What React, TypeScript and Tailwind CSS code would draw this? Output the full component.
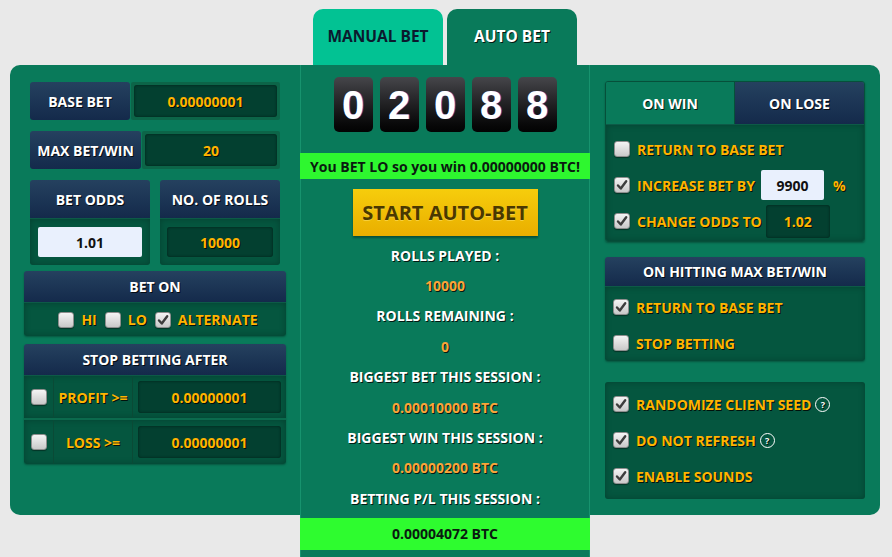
import React from "react";

const FONT = "font-['Open_Sans',sans-serif]";

function Check() {
  return (
    <svg width="12" height="12" viewBox="0 0 12 12">
      <path d="M2 6.5 L4.8 9.5 L10.2 2.2" fill="none" stroke="#3d3d3d" strokeWidth="2.4" strokeLinecap="round" strokeLinejoin="round" />
    </svg>
  );
}

function Cb({ checked }: { checked?: boolean }) {
  return (
    <span className="w-4 h-4 shrink-0 rounded-[3px] border border-[#8e8e8e] bg-linear-to-b from-[#f4f4f4] to-[#c9c9c9] flex items-center justify-center shadow-[0_1px_1px_rgba(0,0,0,0.4)]">
      {checked && <Check />}
    </span>
  );
}

function Qm() {
  return (
    <span className="ml-[4px] w-[15px] h-[15px] rounded-full border border-white flex items-center justify-center text-[9px] leading-none text-white font-bold">
      ?
    </span>
  );
}

const navy =
  "bg-linear-to-b from-[#25415f] to-[#142a4b] text-white text-[14px] font-bold [text-shadow:1px_1px_0_rgba(0,0,0,0.8)] flex items-center justify-center";
const yellow = "text-[#ffb400] font-bold text-[14px] [text-shadow:1px_1px_0_rgba(0,0,0,0.8)]";
const darkBox = "bg-[#05563f] shadow-[inset_0_0_6px_rgba(0,0,0,0.25)]";
const inputDark =
  "bg-[#034030] rounded-[3px] shadow-[inset_0_0_3px_rgba(0,0,0,0.5)] flex items-center justify-center text-[#ffb400] font-bold text-[14px] [text-shadow:1px_1px_0_rgba(0,0,0,0.8)]";
const inputWhite =
  "bg-[#e9f0fd] rounded-[2px] flex items-center justify-center text-[#111] font-bold text-[14px]";

function OptRow({ checked, children }: { checked?: boolean; children: React.ReactNode }) {
  return (
    <div className="h-[36px] flex items-center pl-[8px]">
      <Cb checked={checked} />
      <span className={`ml-[7px] flex items-center ${yellow}`}>{children}</span>
    </div>
  );
}

export default function App() {
  const digits = ["0", "2", "0", "8", "8"];
  const stats: [string, boolean][] = [
    ["ROLLS PLAYED :", false],
    ["10000", true],
    ["ROLLS REMAINING :", false],
    ["0", true],
    ["BIGGEST BET THIS SESSION :", false],
    ["0.00010000 BTC", true],
    ["BIGGEST WIN THIS SESSION :", false],
    ["0.00000200 BTC", true],
    ["BETTING P/L THIS SESSION :", false],
  ];
  return (
    <div className={`w-[892px] h-[557px] bg-[#e9e9e9] overflow-hidden pt-[9px] ${FONT}`}>
      {/* tabs */}
      <div className="flex gap-[4px] pl-[313px]">
        <div className="w-[130px] h-[56px] rounded-t-[10px] bg-[#02c293] flex items-center justify-center text-[15.5px] font-bold text-[#0b1a2e]">
          MANUAL BET
        </div>
        <div className="w-[130px] h-[56px] rounded-t-[10px] bg-[#097a5a] flex items-center justify-center text-[15.5px] font-bold text-white [text-shadow:1px_1px_0_rgba(0,0,0,0.8)]">
          AUTO BET
        </div>
      </div>

      <div className="ml-[10px] flex items-start">
        {/* left column */}
        <div className="w-[290px] h-[450px] bg-[#097a5a] rounded-l-[10px] pt-[17px] px-[14px]">
          <div className="mx-[6px] flex h-[38px] gap-[1px]">
            <div className={`w-[100px] rounded-[3px] ${navy}`}>BASE BET</div>
            <div className="flex-1 bg-[#0c6548] p-[3px] rounded-[2px]">
              <div className={`h-full ${inputDark}`}>0.00000001</div>
            </div>
          </div>
          <div className="mx-[6px] mt-[11px] flex h-[38px] gap-[1px]">
            <div className={`w-[111px] rounded-[3px] ${navy}`}>MAX BET/WIN</div>
            <div className="flex-1 bg-[#0c6548] p-[3px] rounded-[2px]">
              <div className={`h-full ${inputDark}`}>20</div>
            </div>
          </div>
          <div className="mx-[6px] mt-[11px] flex gap-[10px]">
            <div className="w-[120px] h-[85px] rounded-[3px] overflow-hidden flex flex-col">
              <div className={`h-[39px] ${navy} border-b border-[#0d5a47]`}>BET ODDS</div>
              <div className={`flex-1 ${darkBox} px-[8px] pt-[8px]`}>
                <div className={`h-[30px] ${inputWhite}`}>1.01</div>
              </div>
            </div>
            <div className="w-[120px] h-[85px] rounded-[3px] overflow-hidden flex flex-col">
              <div className={`h-[39px] ${navy} border-b border-[#0d5a47]`}>NO. OF ROLLS</div>
              <div className={`flex-1 ${darkBox} px-[7px] pt-[8px]`}>
                <div className={`h-[30px] ${inputDark}`}>10000</div>
              </div>
            </div>
          </div>
          <div className="mt-[6px] h-[65px] rounded-[3px] overflow-hidden flex flex-col shadow-[0_1px_2px_rgba(0,0,0,0.3)]">
            <div className={`h-[32px] ${navy} border-b border-[#0d5a47]`}>BET ON</div>
            <div className={`flex-1 ${darkBox} flex items-center justify-center pl-[6px]`}>
              <Cb />
              <span className={`ml-[7px] ${yellow}`}>HI</span>
              <span className="ml-[8px]"><Cb /></span>
              <span className={`ml-[7px] ${yellow}`}>LO</span>
              <span className="ml-[8px]"><Cb checked /></span>
              <span className={`ml-[7px] ${yellow}`}>ALTERNATE</span>
            </div>
          </div>
          <div className="mt-[8px] rounded-[3px] overflow-hidden flex flex-col shadow-[0_1px_2px_rgba(0,0,0,0.3)]">
            <div className={`h-[32px] ${navy} border-b border-[#0d5a47]`}>STOP BETTING AFTER</div>
            {[
              ["PROFIT >=", "0.00000001"],
              ["LOSS >=", "0.00000001"],
            ].map(([l, v], i) => (
              <div key={i} className={`h-[44px] flex ${darkBox} ${i === 0 ? "border-b-2 border-[#0b6a4d]" : ""}`}>
                <div className="w-[30px] flex items-center justify-center border-r border-[#0a4a36]">
                  <Cb />
                </div>
                <div className={`w-[79px] flex items-center justify-center border-r border-[#0a4a36] ${yellow}`}>{l}</div>
                <div className="flex-1 flex items-center pl-[5px] pr-[5px]">
                  <div className={`h-[32px] w-full ${inputDark}`}>{v}</div>
                </div>
              </div>
            ))}
          </div>
        </div>

        {/* middle column */}
        <div className="w-[290px] h-[492px] bg-[#097a5a] border-x border-[#17936e] flex flex-col items-center pt-[12px]">
          <div className="flex gap-[7px]">
            {digits.map((d, i) => (
              <div
                key={i}
                className="w-[39px] h-[55px] rounded-[5px] bg-linear-to-b from-[#46464b] to-[#030303] flex items-center justify-center text-white text-[40px] font-bold font-['Liberation_Sans',Arial,sans-serif] [text-shadow:1px_0_0_rgba(120,80,255,0.6)]"
              >
                {d}
              </div>
            ))}
          </div>
          <div className="mt-[21px] w-[290px] h-[26px] bg-[#2ef72f] flex items-center justify-center text-[14px] font-bold text-[#0a1a10]">
            You BET LO so you win 0.00000000 BTC!
          </div>
          <div className="mt-[10px] w-[185px] h-[47px] bg-linear-to-b from-[#f6cd0c] to-[#e9ae00] shadow-[0_2px_2px_rgba(0,0,0,0.35)] flex items-center justify-center text-[20px] font-bold text-[#4a3800] [text-shadow:0_1px_0_rgba(255,230,120,0.5)]">
            START AUTO-BET
          </div>
          <div className="mt-[4px] flex flex-col items-center">
            {stats.map(([t, v], i) => (
              <div
                key={i}
                className={`h-[30.4px] flex items-center text-[14px] font-bold [text-shadow:1px_1px_0_rgba(0,0,0,0.8)] ${v ? "text-[#f9a53a]" : "text-white"}`}
              >
                {t}
              </div>
            ))}
          </div>
          <div className="mt-[4px] w-[290px] h-[32px] bg-[#2efc2f] flex items-center justify-center text-[14px] font-bold text-[#0a1a10]">
            0.00004072 BTC
          </div>
        </div>

        {/* right column */}
        <div className="w-[290px] h-[450px] bg-[#097a5a] rounded-r-[10px] pt-[16px] pl-[15px] pr-[15px]">
          <div className="h-[161px] rounded-[3px] overflow-hidden flex flex-col border border-[#06503a] shadow-[0_1px_2px_rgba(0,0,0,0.3)]">
            <div className="h-[43px] flex border-b border-[#0d5a47]">
              <div className="w-[129px] bg-[#097a5a] border-r border-[#06503a] flex items-center justify-center text-white text-[14px] font-bold [text-shadow:1px_1px_0_rgba(0,0,0,0.8)]">
                ON WIN
              </div>
              <div className={`flex-1 ${navy}`}>ON LOSE</div>
            </div>
            <div className={`flex-1 ${darkBox} pt-[6px]`}>
              <OptRow>RETURN TO BASE BET</OptRow>
              <OptRow checked>
                INCREASE BET BY
                <span className={`ml-[6px] w-[63px] h-[30px] ${inputWhite} [text-shadow:none]`}>9900</span>
                <span className="ml-[9px]">%</span>
              </OptRow>
              <OptRow checked>
                CHANGE ODDS TO
                <span className={`ml-[4px] w-[64px] h-[33px] ${inputDark}`}>1.02</span>
              </OptRow>
            </div>
          </div>

          <div className="mt-[15px] h-[104px] rounded-[3px] overflow-hidden flex flex-col shadow-[0_1px_2px_rgba(0,0,0,0.3)]">
            <div className={`h-[32px] ${navy} border-b border-[#0d5a47]`}>ON HITTING MAX BET/WIN</div>
            <div className={`flex-1 ${darkBox} pt-[2px]`}>
              <OptRow checked>RETURN TO BASE BET</OptRow>
              <OptRow>STOP BETTING</OptRow>
            </div>
          </div>

          <div className={`mt-[21px] h-[117px] rounded-[3px] ${darkBox} pt-[4px] shadow-[0_1px_2px_rgba(0,0,0,0.3)]`}>
            <OptRow checked>
              RANDOMIZE CLIENT SEED
              <Qm />
            </OptRow>
            <OptRow checked>
              DO NOT REFRESH
              <Qm />
            </OptRow>
            <OptRow checked>ENABLE SOUNDS</OptRow>
          </div>
        </div>
      </div>
    </div>
  );
}
